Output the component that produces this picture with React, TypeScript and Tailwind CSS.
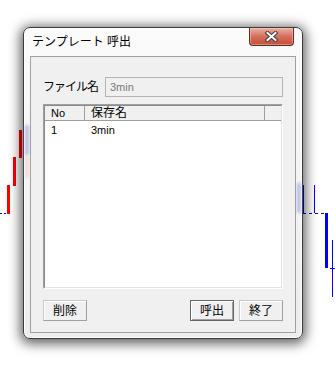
function ChartBehind() {
  // chart drawn behind the dialog (free canvas)
  return (
    <svg className="absolute left-0 top-0" width="335" height="368" viewBox="0 0 335 368">
      <rect x="19" y="130" width="3" height="28" fill="#ff0000" />
      <rect x="13" y="157" width="3" height="29" fill="#ff0000" />
      <rect x="7" y="185" width="3" height="29" fill="#ff0000" />
      <line x1="0" y1="213.5" x2="6" y2="213.5" stroke="#0000ff" strokeDasharray="2 2" />
      <line x1="303.5" y1="185" x2="303.5" y2="213" stroke="#0000ff" />
      <line x1="314.5" y1="185" x2="314.5" y2="213" stroke="#0000ff" />
      <line x1="303" y1="213.5" x2="325" y2="213.5" stroke="#0000ff" strokeDasharray="3 3" />
      <rect x="325" y="213" width="3" height="55" fill="#0000ff" />
      <line x1="332.5" y1="240" x2="332.5" y2="297" stroke="#0000ff" />
      <line x1="330" y1="268.5" x2="335" y2="268.5" stroke="#0000ff" />
    </svg>
  );
}

function CloseButton() {
  return (
    <div className="flex h-[18px] w-[45px] items-center justify-center self-start rounded-b-[4px] border border-t-0 border-[#5e2a22] bg-gradient-to-b from-[#eab1a4] via-[#d4705e] to-[#c84a32] shadow-[inset_0_0_0_1px_rgba(255,220,210,0.45)]">
      <svg width="13" height="11" viewBox="0 0 13 11">
        <path d="M2.5 2 L10.5 9 M10.5 2 L2.5 9" stroke="#3d3d3d" strokeWidth="4" strokeLinecap="square" />
        <path d="M2.5 2 L10.5 9 M10.5 2 L2.5 9" stroke="#ffffff" strokeWidth="2" strokeLinecap="square" />
      </svg>
    </div>
  );
}

function Button({ label, isDefault }: { label: string; isDefault?: boolean }) {
  return (
    <button
      className={
        isDefault
          ? "flex h-[21px] w-[44px] items-center justify-center border border-[#646464] bg-[#f0f0f0] shadow-[inset_1px_1px_0_#fff,inset_-1px_-1px_0_#a0a0a0]"
          : "flex h-[21px] w-[44px] items-center justify-center border border-[#c8c8c8] border-r-[#a0a0a0] border-b-[#a0a0a0] bg-[#f0f0f0] shadow-[inset_1px_1px_0_#fff]"
      }
    >
      {label}
    </button>
  );
}

function TemplateDialog() {
  return (
    <div className="relative flex h-[312px] w-[280px] flex-col rounded-[7px] border border-[#3a3a3a] bg-gradient-to-b from-[#fbfbfb] to-[#ededed] px-[6px] pb-[5px] shadow-[0_2px_12px_3px_rgba(0,0,0,0.6),inset_0_0_0_1px_#fff]">
      {/* glass blur of the chart behind the frame */}
      <div className="pointer-events-none absolute left-[1px] top-[97px] h-[30px] w-[4px] bg-[#a4a4dc] opacity-70 blur-[1.5px]" />
      <div className="pointer-events-none absolute left-[1px] top-[128px] h-[22px] w-[4px] bg-[#eccaca] opacity-60 blur-[1.5px]" />
      <div className="pointer-events-none absolute left-[273px] top-[155px] h-[30px] w-[4px] bg-[#a4a4dc] opacity-70 blur-[1.5px]" />

      <div className="flex h-[28px] items-center justify-between">
        <span className="pl-[2px] text-[12px]">テンプレート 呼出</span>
        <div className="mr-[2px] self-start">
          <CloseButton />
        </div>
      </div>

      <div className="flex flex-1 flex-col border border-[#a0a0a0] bg-[#f0f0f0] px-[12px] pb-[11px] pt-[20px]">
        <div className="flex h-[20px] items-center">
          <span className="w-[62px] tracking-[-1px]">ファイル名</span>
          <div className="flex h-full flex-1 items-center border border-[#b4b4b4] bg-[#f0f0f0] pl-[4px] text-[11px] text-[#7a7a7a]">
            3min
          </div>
        </div>

        <div className="mt-[7px] flex flex-1 flex-col border border-[#a0a0a0] border-r-white border-b-white">
          <div className="flex flex-1 flex-col border border-[#8a8a8a] border-r-[#e3e3e3] border-b-[#e3e3e3] bg-white">
            <div className="flex h-[15px] border-b border-[#a0a0a0] bg-[#f0f0f0]">
              <div className="flex w-[40px] items-center border-r border-[#a0a0a0] pl-[6px] text-[11px]">No</div>
              <div className="flex w-[180px] items-center border-r border-[#a0a0a0] pl-[6px]">保存名</div>
              <div className="flex-1" />
            </div>
            <div className="flex h-[18px] items-center text-[11px]">
              <span className="w-[40px] pl-[6px]">1</span>
              <span className="pl-[6px]">3min</span>
            </div>
          </div>
        </div>

        <div className="mt-[11px] flex items-center justify-between">
          <Button label="削除" />
          <div className="flex gap-[5px]">
            <Button label="呼出" isDefault />
            <Button label="終了" />
          </div>
        </div>
      </div>
    </div>
  );
}

export default function App() {
  return (
    <div className="relative h-[368px] w-[335px] overflow-hidden bg-white pl-[23px] pt-[27px] font-['Liberation_Sans','Noto_Sans_CJK_JP',sans-serif] text-[12px] leading-none text-black">
      <ChartBehind />
      <TemplateDialog />
    </div>
  );
}
